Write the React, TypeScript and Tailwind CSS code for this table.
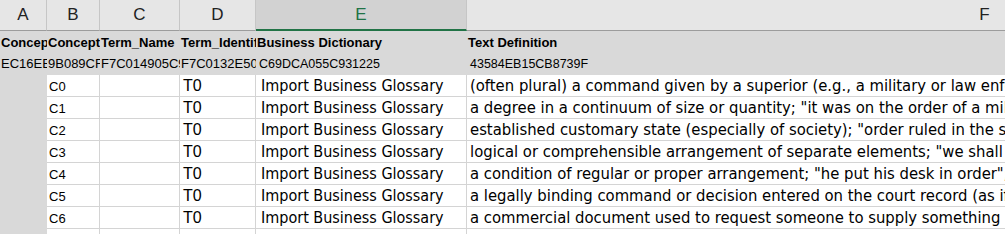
import type { ReactNode } from "react";

const widths = ["w-[47px]", "w-[53px]", "w-[80px]", "w-[76px]", "w-[211px]", "w-[1036px]"];

const letters = ["A", "B", "C", "D", "E", "F"];

const titles = ["Concept_Identifier", "Concept_Name", "Term_Name", "Term_Identifier", "Business Dictionary", "Text Definition"];

const ids = ["EC16EE3A21B7", "9B089CF2D4", "F7C014905C9A", "F7C0132E50B1", "C69DCA055C931225", "43584EB15CB8739F"];

const definitions = [
  "(often plural) a command given by a superior (e.g., a military or law enforcement officer) that must be obeyed",
  "a degree in a continuum of size or quantity; \"it was on the order of a million\"",
  "established customary state (especially of society); \"order ruled in the streets\"",
  "logical or comprehensible arrangement of separate elements; \"we shall consider these questions in the order of their presentation\"",
  "a condition of regular or proper arrangement; \"he put his desk in order\"; \"the machine is now in working order\"",
  "a legally binding command or decision entered on the court record (as if issued by a court or judge)",
  "a commercial document used to request someone to supply something in return for payment",
];

function Cell({ col, className = "", children }: { col: number; className?: string; children?: ReactNode }) {
  return (
    <div className={`${widths[col]} shrink-0 overflow-hidden whitespace-nowrap ${className}`}>
      {children}
    </div>
  );
}

export default function App() {
  return (
    <div className="w-[1005px] h-[242px] overflow-hidden bg-white font-['Liberation_Sans',Arial,sans-serif] text-black">
      {/* column letters */}
      <div className="flex h-[31px] bg-[#e6e6e6]">
        {letters.map((letter, i) =>
          i === 4 ? (
            <Cell key={letter} col={i} className="flex items-center justify-center bg-[#d2d2d2] border-b-2 border-[#217346] border-r border-r-[#c6c6c6] text-[17px] text-[#217346]">
              {letter}
            </Cell>
          ) : (
            <Cell key={letter} col={i} className="flex items-center justify-center border-b border-[#9c9c9c] border-r border-r-[#c6c6c6] text-[17px] text-[#222]">
              {letter}
            </Cell>
          ),
        )}
      </div>

      {/* title row */}
      <div className="flex h-[22px] bg-[#d9d9d9]">
        {titles.map((title, i) => (
          <Cell key={title} col={i} className="pl-[1px] pt-[4px] text-[13px] font-bold leading-[15px]">
            {title}
          </Cell>
        ))}
      </div>

      {/* id row */}
      <div className="flex h-[22px] bg-[#d9d9d9]">
        {ids.map((id, i) => (
          <Cell key={id} col={i} className={`pl-[1px] pt-[4px] leading-[14px] ${i < 4 ? "text-[13px]" : "text-[12.5px] pl-[3px]"}`}>
            {id}
          </Cell>
        ))}
      </div>

      {/* data rows */}
      {definitions.map((definition, r) => (
        <div key={r} className="flex h-[22px]">
          <Cell col={0} className="bg-[#d9d9d9]" />
          <Cell col={1} className="border-r border-b border-[#d4d4d4] pl-[2px] pt-[4px] text-[13px] leading-[15px]">
            C{r}
          </Cell>
          <Cell col={2} className="border-r border-b border-[#d4d4d4]" />
          <Cell col={3} className="border-r border-b border-[#d4d4d4] pl-[3px] pt-[2px] text-[16px] leading-[18px]">
            T0
          </Cell>
          <Cell col={4} className="border-r border-b border-[#d4d4d4] pl-[5px] pt-[1px] font-['DejaVu_Sans_Condensed','DejaVu_Sans',sans-serif] text-[16px] leading-[19px]">
            Import Business Glossary
          </Cell>
          <Cell col={5} className="border-b border-[#d4d4d4] pl-[3px] pt-[1px] font-['DejaVu_Sans_Condensed','DejaVu_Sans',sans-serif] text-[16.5px] leading-[19px]">
            {definition}
          </Cell>
        </div>
      ))}

      {/* partially visible row */}
      <div className="flex h-[5px]">
        <Cell col={0} className="bg-[#d9d9d9]" />
        <Cell col={1} className="border-r border-[#d4d4d4]" />
        <Cell col={2} className="border-r border-[#d4d4d4]" />
        <Cell col={3} className="border-r border-[#d4d4d4]" />
        <Cell col={4} className="border-r border-[#d4d4d4]" />
      </div>
    </div>
  );
}
